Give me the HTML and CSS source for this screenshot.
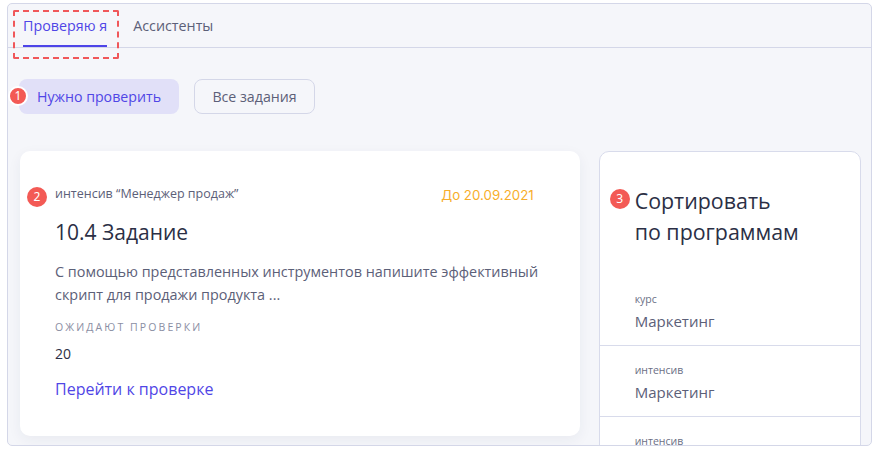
FILE: index.html
```html
<!DOCTYPE html>
<html lang="ru">
<head>
<meta charset="utf-8">
<title>Проверка заданий</title>
<link rel="stylesheet" href="styles.css">
</head>
<body>
<div class="frame">
  <nav class="tabs">
    <div class="tab tab-active">Проверяю я<span class="dash-box"></span></div>
    <div class="tab">Ассистенты</div>
  </nav>
  <div class="content">
    <div class="filters">
      <button class="btn btn-active"><span class="badge badge-1">1</span>Нужно проверить</button>
      <button class="btn btn-outline">Все задания</button>
    </div>
    <div class="cards">
      <div class="card task">
        <span class="badge badge-2">2</span>
        <div class="task-head">
          <span class="program">интенсив “Менеджер продаж”</span>
          <span class="deadline">До 20.09.2021</span>
        </div>
        <h2 class="task-title">10.4 Задание</h2>
        <p class="task-desc">С помощью представленных инструментов напишите эффективный скрипт для продажи продукта ...</p>
        <div class="label">ОЖИДАЮТ ПРОВЕРКИ</div>
        <div class="count">20</div>
        <a class="link">Перейти к проверке</a>
      </div>
      <div class="card sort">
        <span class="badge badge-3">3</span>
        <h2 class="sort-title">Сортировать<br>по программам</h2>
        <ul class="prog-list">
          <li class="prog"><span class="prog-type">курс</span><span class="prog-name">Маркетинг</span></li>
          <li class="prog"><span class="prog-type">интенсив</span><span class="prog-name">Маркетинг</span></li>
          <li class="prog"><span class="prog-type">интенсив</span><span class="prog-name">Маркетинг</span></li>
        </ul>
      </div>
    </div>
  </div>
</div>
</body>
</html>
```

FILE: styles.css
```css
* { box-sizing: border-box; }
html, body { margin: 0; padding: 0; background: #fff; }
body {
  font-family: "Open Sans", "Noto Sans", sans-serif;
  color: #2b2f45;
}
.frame {
  margin: 3px 0 0 7px;
  width: 865px;
  height: 443px;
  border: 1px solid #d4d7e8;
  border-radius: 5px;
  background: #f5f6fa;
  overflow: hidden;
}
.tabs {
  display: flex;
  height: 44px;
  border-bottom: 1px solid #d4d7e8;
  padding-left: 15px;
  gap: 26px;
}
.tab {
  position: relative;
  display: flex;
  align-items: center;
  font-size: 14.3px;
  color: #5c6078;
  height: 100%;
}
.tab-active {
  color: #5046e6;
}
.tab-active::after {
  content: "";
  position: absolute;
  left: 0;
  right: 0;
  bottom: 0;
  height: 2px;
  background: #4d44e8;
}
.dash-box {
  position: absolute;
  left: -10px;
  right: -12px;
  top: 6px;
  height: 49px;
  border: 2px dashed #f0575a;
  border-radius: 2px;
}
.content {
  padding: 31px 10px 0 11px;
}
.filters {
  display: flex;
  gap: 15px;
}
.btn {
  position: relative;
  height: 35px;
  border-radius: 8px;
  font-family: inherit;
  font-size: 14.2px;
  padding: 0 16px;
  cursor: pointer;
}
.btn-active {
  width: 160px;
  background: #e1e0f8;
  border: none;
  color: #5046e6;
}
.btn-outline {
  width: 121px;
  background: #f5f6fa;
  border: 1px solid #d4d7e8;
  color: #5c6078;
}
.badge {
  position: absolute;
  display: flex;
  align-items: center;
  justify-content: center;
  width: 20px;
  height: 20px;
  border-radius: 50%;
  background: #f35a55;
  color: #fff;
  font-size: 12px;
  font-family: "Noto Sans", sans-serif;
  line-height: 1;
}
.badge-1 {
  left: -11px;
  top: 7px;
  border: 2px solid #fff;
}
.cards {
  display: flex;
  gap: 19px;
  margin-top: 37px;
  align-items: flex-start;
}
.card {
  position: relative;
  background: #fff;
  border-radius: 10px;
}
.task {
  width: 561px;
  margin-left: 1px;
  height: 285px;
  padding: 32px 16px 0 35px;
  box-shadow: 0 4px 14px rgba(40, 45, 90, 0.06);
}
.badge-2 { left: 7px; top: 36px; }
.task-head {
  display: flex;
  justify-content: space-between;
  align-items: flex-start;
  height: 22px;
  margin-right: 30px;
}
.program {
  font-size: 12.5px;
  line-height: 22px;
  color: #5c6078;
}
.deadline {
  font-family: "Inter", sans-serif;
  font-size: 13.3px;
  line-height: 22px;
  color: #f7ae2b;
  margin-top: 1px;
}
.task-title {
  margin: 13px 0 0;
  font-size: 21px;
  font-weight: 400;
  line-height: 28px;
  color: #2b2f45;
}
.task-desc {
  margin: 14px 0 0;
  font-size: 14.4px;
  line-height: 23px;
  color: #5c6078;
}
.label {
  margin-top: 14px;
  font-size: 10.5px;
  letter-spacing: 2.1px;
  color: #8a8ea3;
}
.count {
  margin-top: 10px;
  font-size: 14px;
  color: #2b2f45;
}
.link {
  display: block;
  margin-top: 15px;
  font-size: 16px;
  color: #5046e6;
}
.sort {
  width: 263px;
  height: 320px;
  border: 1px solid #d8dbeb;
  padding-top: 33px;
}
.badge-3 { left: 10px; top: 37px; }
.sort-title {
  margin: 0;
  padding-left: 35px;
  font-size: 21.4px;
  font-weight: 400;
  line-height: 31px;
  color: #2b2f45;
}
.prog-list {
  list-style: none;
  margin: 42px 0 0;
  padding: 0;
}
.prog {
  display: flex;
  flex-direction: column;
  padding: 2px 0 13px 35px;
  border-bottom: 1px solid #d8dbeb;
}
.prog + .prog { padding-top: 16px; }
.prog-type {
  font-size: 10.5px;
  color: #6b6f85;
  line-height: 16px;
}
.prog-name {
  margin-top: 3px;
  font-size: 15px;
  color: #5c6078;
  line-height: 22px;
}
```
